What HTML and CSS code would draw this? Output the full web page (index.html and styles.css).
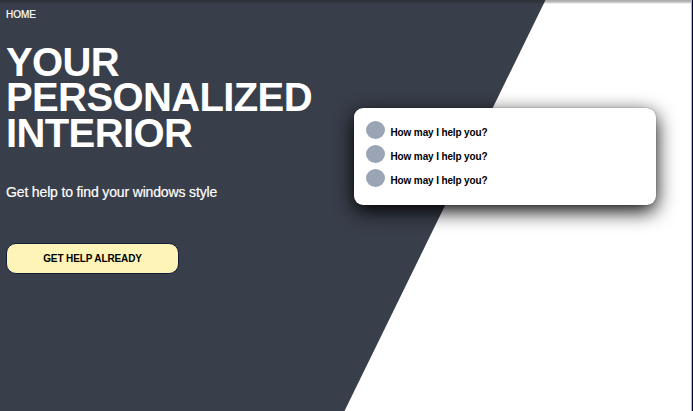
FILE: index.html
```html
<!DOCTYPE html>
<html lang="en">
<head>
<meta charset="utf-8">
<title>Personalized Interior</title>
<link rel="stylesheet" href="styles.css">
</head>
<body>
<main class="page">
  <section class="intro">
    <nav><a class="home">HOME</a></nav>
    <h1 class="title">YOUR<br>PERSONALIZED<br>INTERIOR</h1>
    <p class="lead">Get help to find your windows style</p>
    <button class="cta">GET HELP ALREADY</button>
  </section>
  <ul class="chat">
    <li class="message"><span class="avatar"></span><span class="text">How may I help you?</span></li>
    <li class="message"><span class="avatar"></span><span class="text">How may I help you?</span></li>
    <li class="message"><span class="avatar"></span><span class="text">How may I help you?</span></li>
  </ul>
</main>
</body>
</html>
```
FILE: styles.css
```css
* {
  box-sizing: border-box;
}

body {
  margin: 0;
  font-family: "Liberation Sans", Arial, sans-serif;
}

.page {
  position: relative;
  display: flex;
  align-items: flex-start;
  width: 693px;
  height: 411px;
  overflow: hidden;
  border-right: 1px solid #000033;
  background: #fff;
}

.page::before {
  content: "";
  position: absolute;
  inset: 0;
  background: #383e4a;
  clip-path: polygon(0 0, 545.5px 0, 344.5px 100%, 0 100%);
}

.page::after {
  content: "";
  position: absolute;
  inset: 0;
  border-right: 1px solid #b8b8bc;
  background: linear-gradient(rgba(29, 32, 32, .38), rgba(29, 32, 32, .3) 2px, rgba(29, 32, 32, 0) 4px);
}

.intro {
  position: relative;
  display: flex;
  flex-direction: column;
  align-items: flex-start;
  width: 354px;
  padding: 9px 0 0 6px;
  color: #fff;
}

.home {
  display: block;
  font-size: 10px;
  line-height: 12px;
  -webkit-text-stroke: .2px #fff;
}

.title {
  margin: 24px 0 0;
  font-size: 40px;
  line-height: 35.3px;
  letter-spacing: -.62px;
}

.lead {
  margin: 33px 0 0;
  font-size: 14px;
  line-height: 16px;
  letter-spacing: -.15px;
  -webkit-text-stroke: .2px #fff;
}

.cta {
  width: 173px;
  height: 31px;
  margin-top: 43px;
  padding: 0;
  border: 1px solid #101c3c;
  border-radius: 10px;
  background: #fff4b8;
  color: #000;
  font: bold 10px/29px "Liberation Sans", Arial, sans-serif;
  letter-spacing: -.12px;
}

.chat {
  position: relative;
  display: flex;
  flex-direction: column;
  gap: 6px;
  width: 302px;
  height: 97px;
  margin: 108px 0 0;
  padding: 13px 12px;
  border-radius: 9px;
  background: #fff;
  box-shadow: 0 0 1px rgba(0, 0, 0, .6), 0 6px 20px #000;
  list-style: none;
}

.message {
  display: flex;
  align-items: center;
  gap: 5.5px;
  height: 18px;
}

.avatar {
  width: 19px;
  height: 18px;
  border-radius: 50%;
  background: #9aa4b5;
}

.text {
  padding-top: 5px;
  color: #000;
  font-size: 10px;
  font-weight: bold;
  line-height: 12px;
  letter-spacing: -.13px;
}
```
